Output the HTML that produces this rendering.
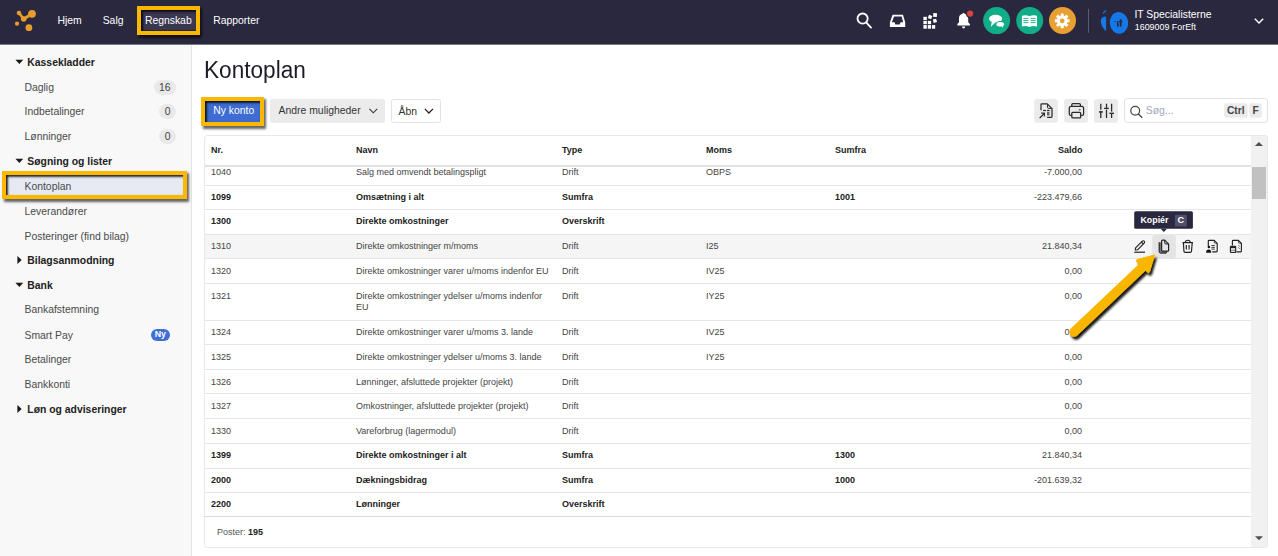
<!DOCTYPE html>
<html><head><meta charset="utf-8">
<style>
*{margin:0;padding:0;box-sizing:border-box}
html,body{width:1278px;height:556px;overflow:hidden;background:#fff;font-family:"Liberation Sans",sans-serif;position:relative}
.abs{position:absolute}
#hdr{position:absolute;left:0;top:0;width:1278px;height:45px;background:#2a283e;border-bottom:1px solid #7a7988}
.nav{position:absolute;top:15.3px;font-size:10.4px;line-height:12px;color:#fff;white-space:nowrap}
#side{position:absolute;left:0;top:45px;width:192px;height:511px;background:#f8f8f8;border-right:1px solid #e4e4e4}
.sh{position:absolute;left:27.3px;font-size:10.4px;line-height:12px;font-weight:bold;color:#222;white-space:nowrap}
.si{position:absolute;left:24.5px;font-size:10.4px;line-height:12px;color:#4a4a4a;white-space:nowrap}
.tri-d{position:absolute;left:15.8px;width:0;height:0;border-left:3.7px solid transparent;border-right:3.7px solid transparent;border-top:4.3px solid #222}
.tri-r{position:absolute;left:17.2px;width:0;height:0;border-top:4.3px solid transparent;border-bottom:4.3px solid transparent;border-left:4.6px solid #222}
.badge{position:absolute;height:14.8px;border-radius:7.4px;background:#e9e9e9;color:#444;font-size:10.4px;line-height:14.8px;text-align:center}
.badge.ny{left:150.6px;width:19.5px;height:12px;border-radius:6px;background:#3f6fd6;color:#fff;font-weight:bold;font-size:8.8px;line-height:11.2px}
.hl{position:absolute;border:4px solid #fab900;border-radius:0.5px;box-shadow:2px 2.5px 2.5px rgba(0,0,0,.6), inset 1.8px 1.8px 2.2px rgba(0,0,0,.9)}
#title{position:absolute;left:203.9px;top:58.3px;font-size:22.4px;line-height:26px;color:#1c1b29;transform:scale(1.01,1.1);transform-origin:0 21px}
.btn{position:absolute;top:98.6px;height:24px;border-radius:2.5px;font-size:10.4px;line-height:24.4px;white-space:nowrap}
#card{position:absolute;left:204px;top:135px;width:1064px;height:413px;border:1px solid #e8e8e8;border-radius:3px;overflow:hidden;background:#fff}
.th{position:absolute;top:8.7px;font-size:9.0px;line-height:11px;font-weight:bold;color:#222}
.row{position:absolute;left:0;width:1046px;border-bottom:1px solid #e6e6e6;font-size:9.0px;line-height:11px;color:#444}
.row.b{font-weight:bold;color:#222}
.row.hov{background:#f5f5f5}
.c{position:absolute;white-space:nowrap}
.sal{right:169px;text-align:right}
</style></head><body>
<div id="hdr">
  <svg class="abs" style="left:0;top:0" width="44" height="44" viewBox="0 0 44 44">
    <g fill="#e89c2c" stroke="#e89c2c">
    <line x1="19" y1="13" x2="23.7" y2="19" stroke-width="2.6"/>
    <line x1="32" y1="13.8" x2="23.7" y2="19" stroke-width="3"/>
    <circle cx="32" cy="13.8" r="3.9" stroke="none"/>
    <circle cx="19" cy="13" r="2.3" stroke="none"/>
    <circle cx="23.7" cy="19" r="2.8" stroke="none"/>
    <circle cx="17" cy="23.7" r="2.1" stroke="none"/>
    <circle cx="28.9" cy="27.7" r="3.4" stroke="none"/>
    </g>
  </svg>
  <div class="nav" style="left:57.4px">Hjem</div>
  <div class="nav" style="left:102.7px">Salg</div>
  <div class="abs" style="left:140.8px;top:9.9px;width:55px;height:20.6px;background:#3a3850"></div>
  <div class="nav" style="left:144.9px">Regnskab</div>
  <div class="nav" style="left:213.2px">Rapporter</div>
  <div class="hl" style="left:136.8px;top:5.9px;width:63.1px;height:29.2px"></div>

  <svg class="abs" style="left:0;top:0" width="1278" height="44" viewBox="0 0 1278 44">
    <g fill="none" stroke="#fff" stroke-linecap="round">
      <circle cx="862.6" cy="18.6" r="5.1" stroke-width="1.8"/>
      <line x1="866.4" y1="22.6" x2="871" y2="27.6" stroke-width="1.9"/>
    </g>
    <path fill="#fff" fill-rule="evenodd" d="M892.6,14.7 L903,14.7 L905.2,22.3 L905.2,26.9 L889.9,26.9 L889.9,22.3 Z M894,16.5 L901.6,16.5 L903.2,22.2 L900.6,22.2 L899.7,24.5 L895.4,24.5 L894.5,22.2 L891.9,22.2 Z"/>
    <g fill="#fff">
      <rect x="923.4" y="25.1" width="3.4" height="3.6"/>
      <rect x="927.8" y="25.1" width="3.3" height="3.6"/>
      <rect x="932" y="25.1" width="3.2" height="3.6"/>
      <rect x="923.4" y="20.9" width="3.4" height="3.3"/>
      <rect x="927.8" y="20.9" width="3.3" height="3.3"/>
      <rect x="923.4" y="16.8" width="3.4" height="3.3"/>
      <rect x="933.2" y="19.1" width="3.4" height="3.4" transform="rotate(-15 934.9 20.8)"/>
      <rect x="928.3" y="15.2" width="3.5" height="3.5" transform="rotate(20 930 17)"/>
      <rect x="933.2" y="13.1" width="3.7" height="3.8"/>
    </g>
    <path fill="#fff" d="M963.6,12.8 Q964.2,13.6 965.4,14.1 Q968.2,15.2 968.2,18.2 V22.2 L969.9,24 V25.5 H957.4 V24 L959,22.2 V18.2 Q959,15.2 961.8,14.1 Q963,13.6 963.6,12.8 Z"/>
    <path fill="#fff" d="M961.9,26.5 L965.3,26.5 Q964.9,28.6 963.6,28.6 Q962.3,28.6 961.9,26.5 Z"/>
    <circle cx="970.1" cy="13.6" r="4.3" fill="#2a283e"/>
    <circle cx="970.1" cy="13.6" r="3.1" fill="#db4343"/>
    <circle cx="996.6" cy="20.6" r="13.5" fill="#10ad88"/>
    <circle cx="1029.7" cy="20.6" r="13.5" fill="#10ad88"/>
    <circle cx="1062.5" cy="20.5" r="13.5" fill="#e9a032"/>
    <g fill="#fff">
      <ellipse cx="995.6" cy="18.7" rx="6.6" ry="3.9"/>
      <path d="M991.8,21.5 L990.9,26.8 L995.5,22.3 Z"/>
    </g>
    <ellipse cx="1000.2" cy="24.2" rx="4.9" ry="3.2" fill="#10ad88"/>
    <g fill="#fff">
      <ellipse cx="1000.2" cy="24.2" rx="3.8" ry="2.3"/>
      <path d="M1001.5,25.5 L1002.9,28.1 L1003.3,24.5 Z"/>
    </g>
    <path fill="#fff" d="M1021.9,15.8 Q1026,14.6 1029.5,16.2 Q1033,14.6 1037,15.8 L1037,26.4 Q1033,25.4 1029.5,26.9 Q1026,25.4 1021.9,26.4 Z"/>
    <g stroke="#10ad88" stroke-width="0.9">
      <line x1="1023.4" y1="18.4" x2="1028.4" y2="18.4"/>
      <line x1="1030.6" y1="18.4" x2="1035.6" y2="18.4"/>
      <line x1="1023.4" y1="20.6" x2="1028.4" y2="20.6"/>
      <line x1="1030.6" y1="20.6" x2="1035.6" y2="20.6"/>
      <line x1="1023.4" y1="22.6" x2="1028.4" y2="22.6"/>
      <line x1="1030.6" y1="22.6" x2="1035.6" y2="22.6"/>
    </g>
    <g transform="translate(1062.2 20.8)" fill="#fff">
      <circle r="5.4"/>
      <g id="teeth">
        <rect x="-1.5" y="-7.4" width="3" height="3" rx="0.4"/>
        <rect x="-1.5" y="4.4" width="3" height="3" rx="0.4"/>
        <rect x="-7.4" y="-1.5" width="3" height="3" rx="0.4"/>
        <rect x="4.4" y="-1.5" width="3" height="3" rx="0.4"/>
      </g>
      <g transform="rotate(45)">
        <rect x="-1.5" y="-7.4" width="3" height="3" rx="0.4"/>
        <rect x="-1.5" y="4.4" width="3" height="3" rx="0.4"/>
        <rect x="-7.4" y="-1.5" width="3" height="3" rx="0.4"/>
        <rect x="4.4" y="-1.5" width="3" height="3" rx="0.4"/>
      </g>
      <circle r="2.4" fill="#e9a032"/>
    </g>
    <rect x="1088" y="8.8" width="1" height="24" fill="#5e5c72"/>
    <g fill="#1677e8">
      <path d="M1106.1,16.6 L1106.1,31.2 Q1100.5,26.5 1100.8,20.6 Q1101.2,16.8 1106.1,16.6 Z"/>
      <path d="M1102.6,13.3 L1105.6,9.8 L1106.4,10.6 L1103.4,14 Z"/>
      <ellipse cx="1119" cy="22.9" rx="9.2" ry="10.85" transform="rotate(-6 1119 22.9)"/>
    </g>
    <g fill="#2a283e">
      <rect x="1117" y="21.3" width="1.6" height="5.3"/>
      <rect x="1114.5" y="21" width="1.1" height="1.1"/>
      <rect x="1119.8" y="19.3" width="1.8" height="7.3"/>
      <rect x="1119" y="21" width="3.5" height="1.1"/>
    </g>
    <polyline points="1254.8,18.8 1259,23 1263.2,18.8" fill="none" stroke="#fff" stroke-width="1.4"/>
  </svg>
  <div class="nav" style="left:1134.4px;top:9.1px">IT Specialisterne</div>
  <div class="nav" style="left:1134.8px;top:21.9px;font-size:8.9px;line-height:11px">1609009 ForEft</div>
</div>
<div id="side">
</div>
<div class="abs" style="left:6px;top:174.8px;width:177px;height:20.5px;background:#e7eaf3"></div>
<div style="position:absolute;left:0;top:0">
<div class="sh" style="top:57.0px">Kassekladder</div>
<svg class="abs" style="left:15px;top:59.0px" width="10" height="6"><path d="M0.4,0.8 L8.3,0.8 L4.35,5.1 Z" fill="#1a1a1a"/></svg>
<div class="si" style="top:82.2px">Daglig</div>
<div class="badge" style="top:80.1px;left:153.5px;width:22.5px"><span style="position:relative;top:0.6px">16</span></div>
<div class="si" style="top:106.3px">Indbetalinger</div>
<div class="badge" style="top:104.2px;left:159.3px;width:16.7px"><span style="position:relative;top:0.6px">0</span></div>
<div class="si" style="top:131.4px">Lønninger</div>
<div class="badge" style="top:129.3px;left:159.3px;width:16.7px"><span style="position:relative;top:0.6px">0</span></div>
<div class="sh" style="top:156.0px">Søgning og lister</div>
<svg class="abs" style="left:15px;top:158.0px" width="10" height="6"><path d="M0.4,0.8 L8.3,0.8 L4.35,5.1 Z" fill="#1a1a1a"/></svg>
<div class="si" style="top:181.3px">Kontoplan</div>
<div class="si" style="top:206.1px">Leverandører</div>
<div class="si" style="top:230.9px">Posteringer (find bilag)</div>
<div class="sh" style="top:254.8px">Bilagsanmodning</div>
<svg class="abs" style="left:17px;top:255.3px" width="6" height="10"><path d="M0.4,1.1 L4.7,5.1 L0.4,9.1 Z" fill="#1a1a1a"/></svg>
<div class="sh" style="top:279.9px">Bank</div>
<svg class="abs" style="left:15px;top:281.9px" width="10" height="6"><path d="M0.4,0.8 L8.3,0.8 L4.35,5.1 Z" fill="#1a1a1a"/></svg>
<div class="si" style="top:304.2px">Bankafstemning</div>
<div class="si" style="top:329.5px">Smart Pay</div>
<div class="badge ny" style="top:328.7px">Ny</div>
<div class="si" style="top:354.3px">Betalinger</div>
<div class="si" style="top:379.3px">Bankkonti</div>
<div class="sh" style="top:403.9px">Løn og adviseringer</div>
<svg class="abs" style="left:17px;top:404.4px" width="6" height="10"><path d="M0.4,1.1 L4.7,5.1 L0.4,9.1 Z" fill="#1a1a1a"/></svg>
</div>
<div class="hl" style="left:2.4px;top:170.8px;width:184.5px;height:28.5px"></div>

<div id="title">Kontoplan</div>
<div class="btn" style="left:205px;width:55px;background:#3e6cd2;color:#fff;top:100.6px;height:21px;line-height:19px;padding-left:8.2px;border-radius:0">Ny konto</div>
<div class="hl" style="left:201px;top:96.8px;width:62.8px;height:29px"></div>
<div class="btn" style="left:269.7px;width:115.2px;background:#ebebeb;color:#333;padding-left:8.9px">Andre muligheder</div>
<div class="btn" style="left:391.3px;width:49.8px;background:#fff;border:1px solid #e2e2e2;color:#333;padding-left:6.2px;line-height:23px">Åbn</div>


<svg class="abs" style="left:0;top:0" width="1278" height="556" viewBox="0 0 1278 556">
  <g fill="none" stroke="#333" stroke-width="1.1">
    <polyline points="369.4,108.9 373.3,112.8 377.2,108.9"/>
    <polyline points="424.8,108.9 428.9,113 433,108.9" stroke-width="1.3" stroke="#222"/>
  </g>
  <rect x="1034.2" y="98.9" width="23.7" height="23.8" rx="3" fill="#ebebeb"/>
  <rect x="1064.1" y="98.9" width="23.9" height="23.8" rx="3" fill="#ebebeb"/>
  <rect x="1094" y="98.9" width="24" height="23.8" rx="3" fill="#ebebeb"/>
  <g transform="translate(1034 99)" fill="none" stroke="#2a2a2a" stroke-width="1.25" stroke-linejoin="round">
    <path d="M7,11.2 V5.7 Q7,4.9 7.8,4.9 H13.3 L18,9.6 V17.6 Q18,18.4 17.2,18.4 H13.1"/>
    <path d="M13.5,5 V8.2 Q13.5,9.4 14.7,9.4 H17.9" stroke-width="1"/>
    <line x1="9.1" y1="11.5" x2="11.9" y2="11.5"/>
    <line x1="12.9" y1="11.5" x2="15.6" y2="11.5"/>
    <rect x="13" y="12.9" width="2.5" height="3.6" fill="#666" stroke="none"/>
    <line x1="6" y1="18.7" x2="10.1" y2="14.6" stroke-linecap="round"/>
    <polyline points="7.2,14.2 10.4,14.2 10.4,17.4"/>
  </g>
  <g transform="translate(1064 99)" fill="none" stroke="#2a2a2a" stroke-width="1.25">
    <path d="M7.8,7.2 V5.6 Q7.8,4.5 8.9,4.5 H15.3 Q16.4,4.5 16.4,5.6 V7.2"/>
    <path d="M7.7,16.4 H6.8 Q5.3,16.4 5.3,14.9 V9.2 Q5.3,7.3 7.2,7.3 H17.7 Q19.6,7.3 19.6,9.2 V14.9 Q19.6,16.4 18.1,16.4 H16.8"/>
    <rect x="7.8" y="13.4" width="8.9" height="5.4" rx="0.9"/>
    <rect x="14.8" y="10.3" width="1.8" height="1" fill="#2a2a2a" stroke="none"/>
  </g>
  <g transform="translate(1094 99)" fill="none" stroke="#2a2a2a" stroke-width="1.3">
    <line x1="6.8" y1="4.7" x2="6.8" y2="10.7"/>
    <line x1="6.8" y1="12.4" x2="6.8" y2="19"/>
    <line x1="5" y1="12.9" x2="8.8" y2="12.9" stroke-width="1.5"/>
    <line x1="12.5" y1="4.7" x2="12.5" y2="9"/>
    <line x1="12.5" y1="10.7" x2="12.5" y2="19"/>
    <line x1="10.1" y1="9.4" x2="14.8" y2="9.4" stroke-width="1.3"/>
    <line x1="17.6" y1="4.7" x2="17.6" y2="12.6"/>
    <line x1="17.6" y1="14.3" x2="17.6" y2="19"/>
    <line x1="15.3" y1="14.3" x2="20" y2="14.3" stroke-width="1.3"/>
  </g>
  <rect x="1124.5" y="98.5" width="143" height="23.9" rx="3" fill="#fff" stroke="#e2e2e2" stroke-width="1"/>
  <g fill="none" stroke="#444" stroke-width="1.1" stroke-linecap="round">
    <circle cx="1135.2" cy="110.8" r="4.4" stroke-width="1.25"/>
    <line x1="1138.4" y1="114" x2="1141.8" y2="117.3" stroke-width="1.3"/>
  </g>
  <rect x="1224.1" y="103.3" width="23.4" height="14.4" rx="2" fill="#ebebeb"/>
  <rect x="1249.4" y="103.3" width="12.3" height="14.4" rx="2" fill="#ebebeb"/>
</svg>
<div class="abs" style="left:1145.8px;top:104.9px;font-size:10.4px;line-height:12px;color:#a0a8ba">Søg...</div>
<div class="abs" style="left:1224.1px;width:23.4px;text-align:center;top:105.1px;font-size:10.2px;line-height:12px;color:#444;font-weight:bold">Ctrl</div>
<div class="abs" style="left:1249.4px;width:12.3px;text-align:center;top:105.1px;font-size:10.2px;line-height:12px;color:#444;font-weight:bold">F</div>
<div id="card">
  <div class="th" style="left:6px">Nr.</div>
  <div class="th" style="left:151px">Navn</div>
  <div class="th" style="left:357px">Type</div>
  <div class="th" style="left:501px">Moms</div>
  <div class="th" style="left:630px">Sumfra</div>
  <div class="th" style="right:184.6px">Saldo</div>
  <div class="abs" style="left:0;top:29px;width:1046px;height:2px;background:#e2e2e2"></div>
  <div class="row" style="top:26px;height:24px"><div class="c" style="left:6px;top:4.7px">1040</div><div class="c" style="left:151px;top:4.7px">Salg med omvendt betalingspligt</div><div class="c" style="left:357px;top:4.7px">Drift</div><div class="c" style="left:501px;top:4.7px">OBPS</div><div class="c" style="left:630px;top:4.7px"></div><div class="c sal" style="top:4.7px;font-weight:normal;color:#444">-7.000,00</div></div>
<div class="row b" style="top:50px;height:24px"><div class="c" style="left:6px;top:5.9px">1099</div><div class="c" style="left:151px;top:5.9px">Omsætning i alt</div><div class="c" style="left:357px;top:5.9px">Sumfra</div><div class="c" style="left:501px;top:5.9px"></div><div class="c" style="left:630px;top:5.9px">1001</div><div class="c sal" style="top:5.9px;font-weight:normal;color:#444">-223.479,66</div></div>
<div class="row b" style="top:74px;height:25px"><div class="c" style="left:6px;top:5.6px">1300</div><div class="c" style="left:151px;top:5.6px">Direkte omkostninger</div><div class="c" style="left:357px;top:5.6px">Overskrift</div><div class="c" style="left:501px;top:5.6px"></div><div class="c" style="left:630px;top:5.6px"></div><div class="c sal" style="top:5.6px;font-weight:normal;color:#444"></div></div>
<div class="row hov" style="top:99px;height:24px"><div class="c" style="left:6px;top:5.6px">1310</div><div class="c" style="left:151px;top:5.6px">Direkte omkostninger m/moms</div><div class="c" style="left:357px;top:5.6px">Drift</div><div class="c" style="left:501px;top:5.6px">I25</div><div class="c" style="left:630px;top:5.6px"></div><div class="c sal" style="top:5.6px;font-weight:normal;color:#444">21.840,34</div></div>
<div class="row" style="top:123px;height:25px"><div class="c" style="left:6px;top:6.9px">1320</div><div class="c" style="left:151px;top:6.9px">Direkte omkostninger varer u/moms indenfor EU</div><div class="c" style="left:357px;top:6.9px">Drift</div><div class="c" style="left:501px;top:6.9px">IV25</div><div class="c" style="left:630px;top:6.9px"></div><div class="c sal" style="top:6.9px;font-weight:normal;color:#444">0,00</div></div>
<div class="row" style="top:148px;height:37px"><div class="c" style="left:6px;top:6.9px">1321</div><div class="c" style="left:151px;top:6.9px">Direkte omkostninger ydelser u/moms indenfor<br>EU</div><div class="c" style="left:357px;top:6.9px">Drift</div><div class="c" style="left:501px;top:6.9px">IY25</div><div class="c" style="left:630px;top:6.9px"></div><div class="c sal" style="top:6.9px;font-weight:normal;color:#444">0,00</div></div>
<div class="row" style="top:185px;height:24px"><div class="c" style="left:6px;top:6.2px">1324</div><div class="c" style="left:151px;top:6.2px">Direkte omkostninger varer u/moms 3. lande</div><div class="c" style="left:357px;top:6.2px">Drift</div><div class="c" style="left:501px;top:6.2px">IV25</div><div class="c" style="left:630px;top:6.2px"></div><div class="c sal" style="top:6.2px;font-weight:normal;color:#444">0,00</div></div>
<div class="row" style="top:209px;height:25px"><div class="c" style="left:6px;top:6.6px">1325</div><div class="c" style="left:151px;top:6.6px">Direkte omkostninger ydelser u/moms 3. lande</div><div class="c" style="left:357px;top:6.6px">Drift</div><div class="c" style="left:501px;top:6.6px">IY25</div><div class="c" style="left:630px;top:6.6px"></div><div class="c sal" style="top:6.6px;font-weight:normal;color:#444">0,00</div></div>
<div class="row" style="top:234px;height:24px"><div class="c" style="left:6px;top:6.6px">1326</div><div class="c" style="left:151px;top:6.6px">Lønninger, afsluttede projekter (projekt)</div><div class="c" style="left:357px;top:6.6px">Drift</div><div class="c" style="left:501px;top:6.6px"></div><div class="c" style="left:630px;top:6.6px"></div><div class="c sal" style="top:6.6px;font-weight:normal;color:#444">0,00</div></div>
<div class="row" style="top:258px;height:25px"><div class="c" style="left:6px;top:7.4px">1327</div><div class="c" style="left:151px;top:7.4px">Omkostninger, afsluttede projekter (projekt)</div><div class="c" style="left:357px;top:7.4px">Drift</div><div class="c" style="left:501px;top:7.4px"></div><div class="c" style="left:630px;top:7.4px"></div><div class="c sal" style="top:7.4px;font-weight:normal;color:#444">0,00</div></div>
<div class="row" style="top:283px;height:25px"><div class="c" style="left:6px;top:6.7px">1330</div><div class="c" style="left:151px;top:6.7px">Vareforbrug (lagermodul)</div><div class="c" style="left:357px;top:6.7px">Drift</div><div class="c" style="left:501px;top:6.7px"></div><div class="c" style="left:630px;top:6.7px"></div><div class="c sal" style="top:6.7px;font-weight:normal;color:#444">0,00</div></div>
<div class="row b" style="top:308px;height:25px"><div class="c" style="left:6px;top:6.1px">1399</div><div class="c" style="left:151px;top:6.1px">Direkte omkostninger i alt</div><div class="c" style="left:357px;top:6.1px">Sumfra</div><div class="c" style="left:501px;top:6.1px"></div><div class="c" style="left:630px;top:6.1px">1300</div><div class="c sal" style="top:6.1px;font-weight:normal;color:#444">21.840,34</div></div>
<div class="row b" style="top:333px;height:24px"><div class="c" style="left:6px;top:5.8px">2000</div><div class="c" style="left:151px;top:5.8px">Dækningsbidrag</div><div class="c" style="left:357px;top:5.8px">Sumfra</div><div class="c" style="left:501px;top:5.8px"></div><div class="c" style="left:630px;top:5.8px">1000</div><div class="c sal" style="top:5.8px;font-weight:normal;color:#444">-201.639,32</div></div>
<div class="row b" style="top:357px;height:24px"><div class="c" style="left:6px;top:6.1px">2200</div><div class="c" style="left:151px;top:6.1px">Lønninger</div><div class="c" style="left:357px;top:6.1px">Overskrift</div><div class="c" style="left:501px;top:6.1px"></div><div class="c" style="left:630px;top:6.1px"></div><div class="c sal" style="top:6.1px;font-weight:normal;color:#444"></div></div>
  <div class="abs" style="left:0;top:380px;width:1046px;height:1px;background:#dadada"></div>
  <div class="abs" style="left:12px;top:390.9px;font-size:9.0px;line-height:11px;color:#555">Poster: <b style="color:#222">195</b></div>
  <div class="abs" style="left:1046px;top:0;width:17px;height:412px;background:#f1f1f1"></div>
  <div class="abs" style="left:1047px;top:31px;width:13.9px;height:32px;background:#c1c1c1"></div>
  <svg class="abs" style="left:1046px;top:0" width="17" height="411">
    <path d="M3.8,9.9 L7.9,5.9 L12,9.9 Z" fill="#505050"/>
    <path d="M4,400.2 L8,404.3 L12,400.2 Z" fill="#505050"/>
  </svg>
</div>

<svg class="abs" style="left:0;top:0" width="1278" height="556" viewBox="0 0 1278 556">
  <defs>
    <filter id="sh" x="-20%" y="-20%" width="150%" height="150%">
      <feGaussianBlur in="SourceAlpha" stdDeviation="1.3"/>
      <feOffset dx="2.4" dy="2.6" result="b"/>
      <feComponentTransfer><feFuncA type="linear" slope="0.9"/></feComponentTransfer>
      <feMerge><feMergeNode/><feMergeNode in="SourceGraphic"/></feMerge>
    </filter>
  </defs>
  <rect x="1152.2" y="235" width="23.7" height="23.3" rx="3" fill="#e4e4e4"/>
  <g fill="none" stroke="#222" stroke-width="1.15" stroke-linejoin="round">
    <!-- pencil -->
    <g transform="translate(1130 236)">
      <path d="M5.3,14 L5.6,11.9 L12.3,5.2 Q13.3,4.3 14.2,5.2 Q15.1,6.1 14.2,7.1 L7.5,13.8 Z"/>
      <line x1="11.4" y1="6.1" x2="13.3" y2="8"/>
      <line x1="4.3" y1="16.2" x2="15" y2="16.2" stroke-width="1.2"/>
    </g>
    <!-- copy -->
    <g transform="translate(1130 236)">
      <path d="M29.9,6.2 V15.5 Q29.9,16.3 30.7,16.3 H36.4" stroke="#777" stroke-width="2.2"/>
      <path d="M29.2,6.2 V15.5 Q29.2,17 30.7,17 H36.4 V15.4" stroke="#222" stroke-width="1"/>
      <path d="M31.6,14.6 V5 Q31.6,4.1 32.5,4.1 H34.6 L38.6,8.1 V14.2 Q38.6,15.1 37.7,15.1 H32.1 Q31.6,15.1 31.6,14.6 Z" fill="#e4e4e4" stroke-width="1.2"/>
      <path d="M34.7,4.3 V6.9 Q34.7,8 35.8,8 H38.4" stroke-width="1"/>
    </g>
    <!-- trash -->
    <g transform="translate(1178 236)">
      <path d="M4.5,6.6 H15" stroke-width="1.2"/>
      <path d="M7.2,6.4 Q7.4,4.2 9.8,4.2 Q12.2,4.2 12.2,6.4" stroke-width="1.1"/>
      <path d="M5.4,7 L5.9,15.1 Q6,16.3 7.2,16.3 H12.2 Q13.4,16.3 13.5,15.1 L14.2,7"/>
      <line x1="8.3" y1="9.1" x2="8.3" y2="13.6"/>
      <line x1="11.1" y1="9.1" x2="11.1" y2="13.6"/>
    </g>
    <!-- person doc -->
    <g transform="translate(1178 236)">
      <path d="M30.3,10 V5 Q30.3,4.3 31,4.3 H36.2 L39.2,7.3 V15.1 Q39.2,15.8 38.5,15.8 H34.2" />
      <path d="M36.3,4.4 V6.4 Q36.3,7.2 37.1,7.2 H39.1" stroke-width="0.8"/>
      <line x1="33.4" y1="9.5" x2="36.8" y2="9.5" stroke-width="0.9"/>
      <line x1="33.4" y1="11.4" x2="36.8" y2="11.4" stroke-width="0.9"/>
      <line x1="33.4" y1="13.1" x2="36.8" y2="13.1" stroke-width="0.9"/>
      <circle cx="30.9" cy="11" r="1.3" fill="#111" stroke="none"/>
      <path d="M28.1,16.8 Q28.1,13.4 30.7,13.4 Q33.2,13.4 33.2,16.8 Z" fill="#111" stroke="none"/>
    </g>
    <!-- calc doc -->
    <g transform="translate(1178 236)">
      <path d="M54.4,9.6 V5 Q54.4,4.3 55.1,4.3 H60.4 L63.4,7.3 V15.1 Q63.4,15.8 62.7,15.8 H58.4"/>
      <path d="M60.5,4.4 V6.4 Q60.5,7.2 61.3,7.2 H63.3" stroke-width="0.8"/>
      <path d="M60.4,9.3 L61.6,10.3 M60.4,11.6 L61.6,12.6" stroke-width="0.8"/>
      <rect x="52.4" y="10.2" width="5.3" height="6.3" rx="0.7" fill="#fff"/>
      <rect x="52.4" y="10.2" width="5.3" height="2" fill="#222" stroke="none"/>
      <path d="M53.8,13.6 V15.3 M55.1,13.6 V15.3 M56.3,13.6 V15.3" stroke-width="0.7"/>
    </g>
  </g>
  <!-- tooltip -->
  <rect x="1134.2" y="211.2" width="58.7" height="17.6" rx="1.6" fill="#2a283e"/>
  <path d="M1160.6,228.7 L1163.8,231.9 L1167,228.7 Z" fill="#2a283e"/>
  <rect x="1174.9" y="214.7" width="12" height="11.7" rx="1" fill="#504e68"/>
  <!-- arrow -->
  <g filter="url(#sh)">
    <line x1="1074" y1="332" x2="1143.5" y2="266.2" stroke="#f9b600" stroke-width="9.4" stroke-linecap="round"/>
    <path d="M1154.6,255 L1136.8,259.6 Q1135.6,260.8 1137,262 L1147.6,272.3 Q1148.8,273.3 1149.4,271.9 Z" fill="#f9b600" stroke="#f9b600" stroke-width="1" stroke-linejoin="round"/>
  </g>
</svg>
<div class="abs" style="left:1140.4px;top:214.6px;font-size:8.9px;line-height:11px;color:#fff;font-weight:bold">Kopiér</div>
<div class="abs" style="left:1175px;width:11.8px;text-align:center;top:214.9px;font-size:9.2px;line-height:11px;color:#fff;font-weight:bold">C</div>
</body></html>
